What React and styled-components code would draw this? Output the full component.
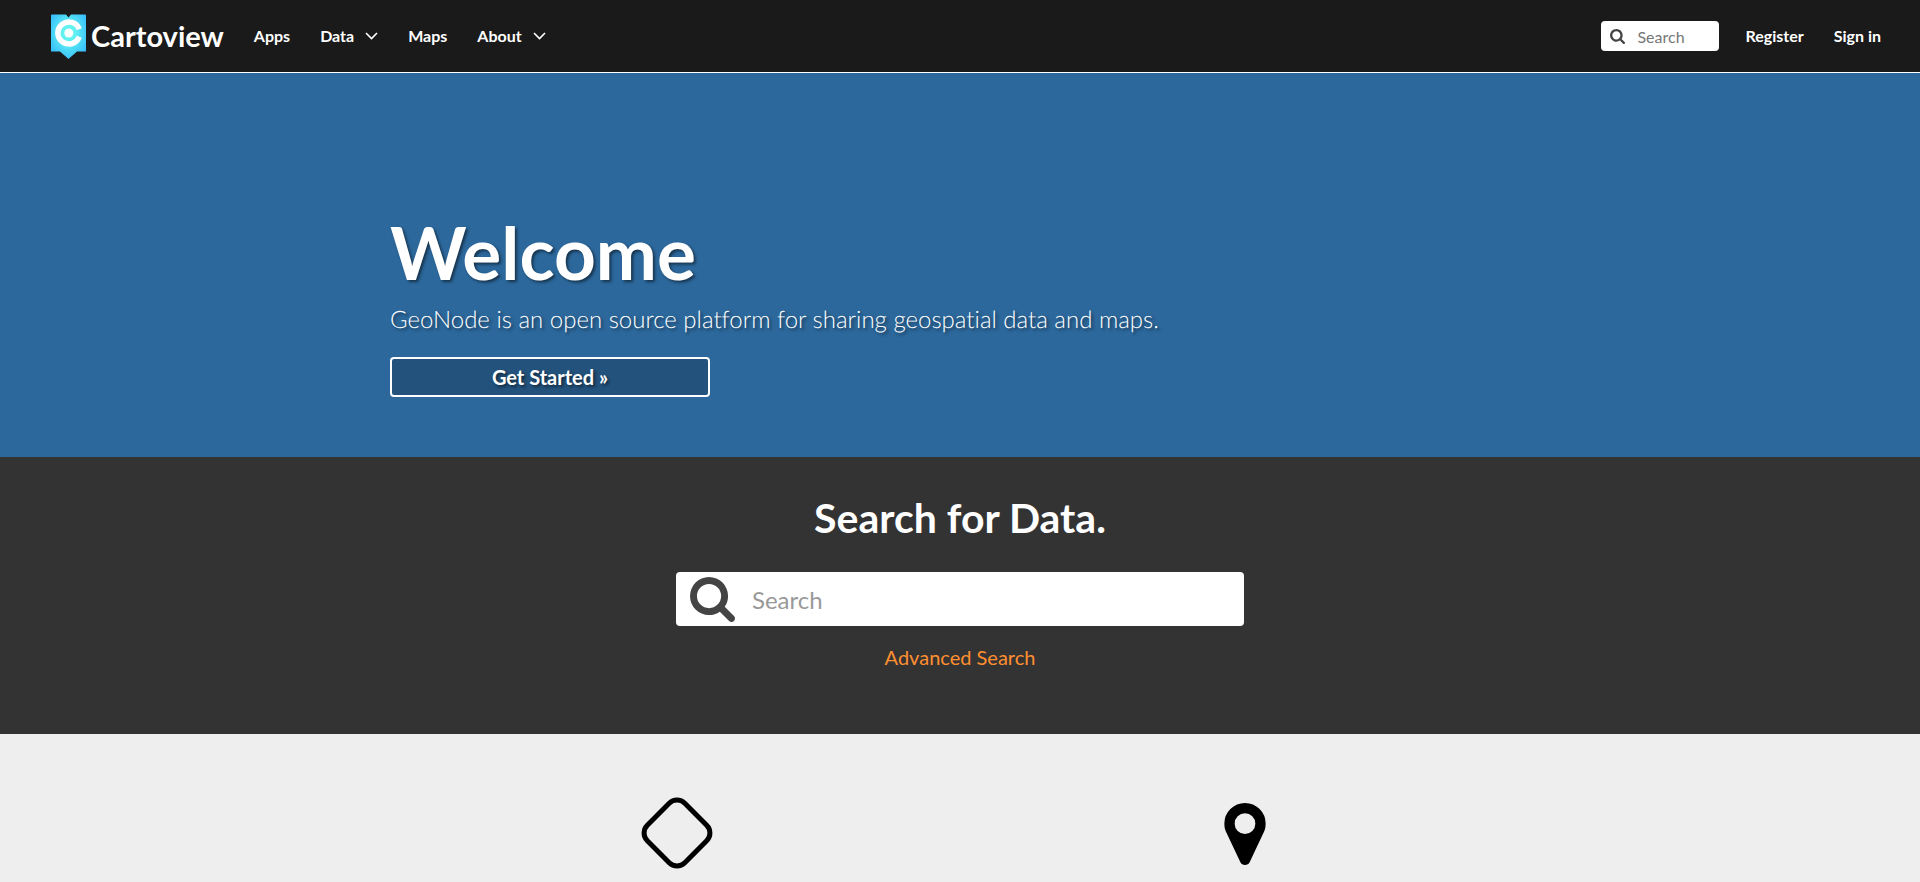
import React from "react";
import styled, { createGlobalStyle, css } from "styled-components";

const GlobalStyle = createGlobalStyle`
  *, *::before, *::after { box-sizing: border-box; }
  body {
    margin: 0;
    background: #eee;
    color: #333;
    font-family: Lato, "Liberation Sans", sans-serif;
    font-size: 16px;
    line-height: 24px;
  }
  h1, h2, p { margin: 0; }
`;

const Header = styled.header`
  display: flex;
  align-items: center;
  justify-content: space-between;
  padding: 0 24px 0 50px;
  min-height: 73px;
  background: #1a1a1a;
  border-bottom: 1px solid #fff;
`;

const Group = styled.div`
  display: flex;
  align-items: center;
`;

const Brand = styled.a`
  display: flex;
  align-items: center;
  gap: 4px;
  margin-right: 15px;
  color: #fff;
  font-size: 29px;
  line-height: 44px;
  font-weight: 700;
  text-decoration: none;
`;

const navItem = css`
  display: flex;
  align-items: center;
  gap: 11px;
  padding: 12px 15px;
  border: 0;
  background: none;
  color: #fff;
  font-family: inherit;
  font-size: 16px;
  line-height: 24px;
  font-weight: 700;
  text-decoration: none;
  cursor: pointer;
`;
const NavLink = styled.a`${navItem}`;
const NavButton = styled.button`${navItem}`;

const SearchForm = styled.form`
  display: flex;
  align-items: center;
  width: ${(p) => (p.$large ? "568px" : "118px")};
  max-width: 100%;
  height: ${(p) => (p.$large ? "54px" : "30px")};
  padding-left: ${(p) => (p.$large ? "14px" : "9px")};
  gap: ${(p) => (p.$large ? "17px" : "12px")};
  margin-right: ${(p) => (p.$large ? "0" : "11px")};
  border-radius: 4px;
  background: #fff;
  color: #444;
  svg { flex: none; }
`;

const SearchInput = styled.input`
  flex: 1;
  min-width: 0;
  height: 100%;
  padding: 0;
  border: 0;
  outline: 0;
  background: none;
  color: #555;
  font-family: inherit;
  font-size: ${(p) => (p.$large ? "24px" : "16px")};
  &::placeholder {
    color: ${(p) => (p.$large ? "#999" : "#777")};
    opacity: 1;
  }
`;

const Hero = styled.section`
  padding: 139px 0 60px;
  background: #2c689c;
  color: #fff;
  text-shadow: 2px 2px 3px rgba(0, 0, 0, 0.5);
`;

const Container = styled.div`
  width: 100%;
  max-width: 1170px;
  margin: 0 auto;
  padding: 0 15px;
`;

const HeroTitle = styled.h1`
  font-size: 73px;
  line-height: 80px;
  font-weight: 700;
`;

const Lead = styled.p`
  margin: 11px 0 20px;
  font-size: 24px;
  line-height: 34px;
  font-weight: 300;
  font-variant-ligatures: none;
  text-rendering: geometricPrecision;
`;

const CallToAction = styled.a`
  display: block;
  width: 320px;
  max-width: 100%;
  border: 2px solid #fff;
  border-radius: 4px;
  background: #23527c;
  color: #fff;
  font-size: 20px;
  line-height: 36px;
  font-weight: 700;
  text-align: center;
  text-decoration: none;
`;

const SearchSection = styled.section`
  display: flex;
  flex-direction: column;
  align-items: center;
  padding: 36px 15px 63px;
  background: #333;
`;

const SearchTitle = styled.h2`
  margin-bottom: 29px;
  color: #fff;
  font-size: 41px;
  line-height: 50px;
  font-weight: 700;
`;

const AdvancedLink = styled.a`
  margin-top: 17px;
  color: #ff8f31;
  font-size: 20px;
  line-height: 28px;
  text-decoration: none;
`;

const Features = styled.section`
  padding-top: 60px;
`;

const FeatureGrid = styled.div`
  display: grid;
  grid-template-columns: 1fr 1fr;
`;

const Feature = styled.a`
  display: flex;
  align-items: center;
  justify-content: center;
  height: 78px;
  color: #000;
`;

const LogoMark = () => (
  <svg width="37" height="46" viewBox="0 0 37 46" aria-hidden="true">
    <defs>
      <radialGradient id="glow" cx="50%" cy="42%" r="60%">
        <stop offset="0.3" stopColor="#62f2f0" />
        <stop offset="1" stopColor="#38c0fc" />
      </radialGradient>
    </defs>
    <path d="M2 1.500H16L18.500 4.500L21 1.500H35Q36 1.500 36 2.500V38.500H27L18.500 46L10 38.500H1V2.500Q1 1.500 2 1.500Z" fill="url(#glow)" />
    <path d="M29.200 16.200A11 11 0 1 0 29.200 23.800" fill="none" stroke="#fff" strokeWidth="5.500" />
    <circle cx="18.800" cy="20" r="4.500" fill="#fff" />
  </svg>
);

const Chevron = () => (
  <svg width="13" height="8" viewBox="0 0 13 8" aria-hidden="true">
    <path d="M1 1L6.500 6.500L12 1" fill="none" stroke="currentColor" strokeWidth="1.600" />
  </svg>
);

const Magnifier = ({ size }) => (
  <svg width={size} height={size} viewBox="64 128 1664 1664" fill="currentColor" aria-hidden="true">
    <path d="M1216 832q0-185-131.500-316.500t-316.500-131.500-316.500 131.500-131.500 316.500 131.500 316.500 316.500 131.500 316.500-131.500 131.500-316.500zm512 832q0 52-38 90t-90 38q-54 0-90-38l-343-342q-179 124-399 124-143 0-273.500-55.500t-225-150-150-225-55.500-273.500 55.500-273.500 150-225 225-150 273.500-55.500 273.500 55.500 225 150 150 225 55.500 273.500q0 220-124 399l343 343q37 37 37 90z" />
  </svg>
);

const Diamond = () => (
  <svg width="76" height="72" viewBox="-40 -36 76 72" aria-hidden="true">
    <rect x="-26.500" y="-26.500" width="53" height="53" rx="11" transform="rotate(45)" fill="none" stroke="currentColor" strokeWidth="5" />
  </svg>
);

const Marker = () => (
  <svg width="42" height="64" viewBox="384 79 1024 1585" fill="currentColor" aria-hidden="true">
    <path d="M1152 640q0-106-75-181t-181-75-181 75-75 181 75 181 181 75 181-75 75-181zm256 0q0 109-33 179l-364 774q-16 33-47.500 52t-67.500 19-67.500-19-46.500-52l-365-774q-33-70-33-179 0-212 150-362t362-150 362 150 150 362z" />
  </svg>
);

const SearchBox = ({ large, label }) => (
  <SearchForm $large={large} role="search" onSubmit={(e) => e.preventDefault()}>
    <Magnifier size={large ? 45 : 15} />
    <SearchInput $large={large} type="text" placeholder="Search" aria-label={label} />
  </SearchForm>
);

export default function App() {
  return (
    <>
      <GlobalStyle />
      <Header>
        <Group as="nav" aria-label="Main">
          <Brand href="#home">
            <LogoMark />
            Cartoview
          </Brand>
          <NavLink href="#apps">Apps</NavLink>
          <NavButton type="button" aria-haspopup="true">Data<Chevron /></NavButton>
          <NavLink href="#maps">Maps</NavLink>
          <NavButton type="button" aria-haspopup="true">About<Chevron /></NavButton>
        </Group>
        <Group>
          <SearchBox label="Search site" />
          <NavLink href="#register">Register</NavLink>
          <NavLink href="#signin">Sign in</NavLink>
        </Group>
      </Header>
      <main>
        <Hero>
          <Container>
            <HeroTitle>Welcome</HeroTitle>
            <Lead>GeoNode is an open source platform for sharing geospatial data and maps.</Lead>
            <CallToAction href="#start">Get Started »</CallToAction>
          </Container>
        </Hero>
        <SearchSection>
          <SearchTitle>Search for Data.</SearchTitle>
          <SearchBox large label="Search for data" />
          <AdvancedLink href="#advanced">Advanced Search</AdvancedLink>
        </SearchSection>
        <Features>
          <Container>
            <FeatureGrid>
              <Feature href="#layers" aria-label="Layers"><Diamond /></Feature>
              <Feature href="#map-list" aria-label="Maps"><Marker /></Feature>
            </FeatureGrid>
          </Container>
        </Features>
      </main>
    </>
  );
}
